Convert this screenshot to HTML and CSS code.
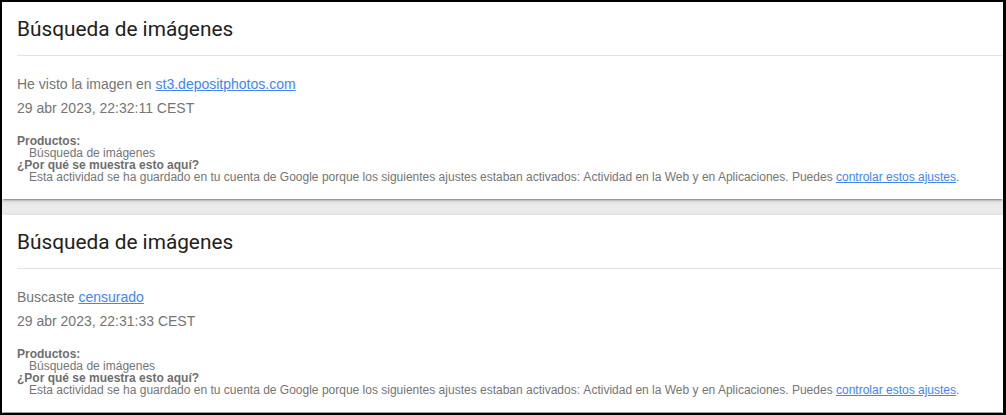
FILE: index.html
```html
<!DOCTYPE html>
<html lang="es">
<head>
<meta charset="utf-8">
<title>Búsqueda de imágenes</title>
<link rel="stylesheet" href="styles.css">
</head>
<body>
<div class="frame">
  <div class="card">
    <div class="header">Búsqueda de imágenes</div>
    <div class="content">
      <div class="line">He visto la imagen en <a href="#">st3.depositphotos.com</a></div>
      <div class="line">29 abr 2023, 22:32:11 CEST</div>
    </div>
    <div class="caption">
      <div class="label">Productos:</div>
      <div class="indent">Búsqueda de imágenes</div>
      <div class="label">¿Por qué se muestra esto aquí?</div>
      <div class="indent">Esta actividad se ha guardado en tu cuenta de Google porque los siguientes ajustes estaban activados:&nbsp;Actividad en la Web y en Aplicaciones. Puedes <a href="#">controlar estos ajustes</a>.</div>
    </div>
  </div>
  <div class="card">
    <div class="header">Búsqueda de imágenes</div>
    <div class="content">
      <div class="line">Buscaste <a href="#">censurado</a></div>
      <div class="line">29 abr 2023, 22:31:33 CEST</div>
    </div>
    <div class="caption">
      <div class="label">Productos:</div>
      <div class="indent">Búsqueda de imágenes</div>
      <div class="label">¿Por qué se muestra esto aquí?</div>
      <div class="indent">Esta actividad se ha guardado en tu cuenta de Google porque los siguientes ajustes estaban activados:&nbsp;Actividad en la Web y en Aplicaciones. Puedes <a href="#">controlar estos ajustes</a>.</div>
    </div>
  </div>
</div>
</body>
</html>
```

FILE: styles.css
```css
html, body {
  margin: 0;
  padding: 0;
  background: #fff;
}

.frame {
  box-sizing: border-box;
  width: 1006px;
  height: 415px;
  border-top: 2px solid #000;
  border-left: 2px solid #000;
  border-right: 3px solid #000;
  border-bottom: 2px solid #000;
  background: #ebebeb;
  overflow: hidden;
  display: flex;
  flex-direction: column;
  gap: 16px;
  font-family: "Liberation Sans", Arial, sans-serif;
}

.card {
  background: #fff;
  padding: 0 0 16px 15px;
  box-shadow: 0 2px 2px 0 rgba(0,0,0,.14), 0 3px 1px -2px rgba(0,0,0,.2), 0 1px 5px 0 rgba(0,0,0,.12);
}

.header {
  font-family: Roboto, "Liberation Sans", sans-serif;
  font-size: 20.8px;
  line-height: 24px;
  color: #212121;
  padding-top: 15px;
  padding-bottom: 14px;
  border-bottom: 1px solid #e3e3e3;
}

.content {
  margin-top: 16px;
  font-size: 14px;
  line-height: 24px;
  color: #757575;
}

.caption {
  margin-top: 15px;
  font-size: 12px;
  line-height: 12px;
  color: #757575;
}

.label {
  font-weight: bold;
  color: #6e6e6e;
}

.indent {
  padding-left: 12px;
}

a {
  color: #4285f4;
  text-decoration: underline;
}
```
